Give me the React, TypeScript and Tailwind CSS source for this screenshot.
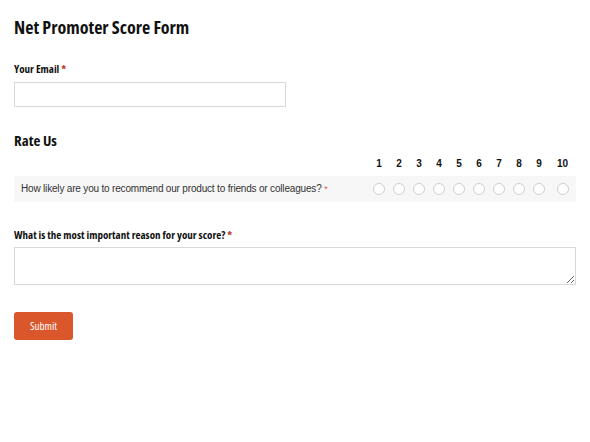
import React from "react";

const cond = "font-['Open_Sans',sans-serif] [font-stretch:75%]";

export default function App() {
  const nums = [1, 2, 3, 4, 5, 6, 7, 8, 9, 10];
  return (
    <div className="w-[590px] h-[442px] bg-white px-[14px] pt-[15px] text-[#111]">
      <h1 className={`${cond} font-bold text-[18px] leading-[24px]`}>Net Promoter Score Form</h1>
      <label className={`${cond} font-bold text-[11px] leading-[16px] block mt-[22px]`}>
        Your Email <span className="text-[#c0392b]">*</span>
      </label>
      <input className="block mt-[5px] w-[272px] h-[25px] border border-[#d8d8d8] bg-white outline-none" />
      <h2 className={`${cond} font-bold text-[15px] leading-[20px] mt-[23px]`}>Rate Us</h2>
      <div className="flex font-['Liberation_Sans',Arial,sans-serif] font-bold text-[10px] leading-[12px] mt-[8px]">
        <div className="flex-1" />
        {nums.map((n) => (
          <div key={n} className={`${n === 10 ? "w-[27px]" : "w-[20px]"} text-center`}>{n}</div>
        ))}
      </div>
      <div className="flex items-center h-[26px] mt-[6px] bg-[#f7f7f7] font-['Liberation_Sans',Arial,sans-serif] text-[10px] text-[#333]">
        <div className="flex-1 pl-[7px] whitespace-nowrap tracking-[-0.18px]">
          How likely are you to recommend our product to friends or colleagues? <span className="text-[#d9534f] text-[9px]">*</span>
        </div>
        {nums.map((n) => (
          <div key={n} className={`${n === 10 ? "w-[27px]" : "w-[20px]"} flex justify-center`}>
            <span className="block w-[12px] h-[12px] rounded-full border border-[#cfcfcf] bg-white" />
          </div>
        ))}
      </div>
      <label className={`${cond} font-bold text-[11px] leading-[16px] block mt-[25px]`}>
        What is the most important reason for your score? <span className="text-[#c0392b]">*</span>
      </label>
      <textarea className="block mt-[4px] w-[562px] h-[38px] border border-[#d8d8d8] bg-white outline-none resize-y" />
      <button className={`${cond} block mt-[27px] w-[59px] h-[28px] rounded-[3px] bg-[#d9572b] text-white text-[11px]`}>Submit</button>
    </div>
  );
}
